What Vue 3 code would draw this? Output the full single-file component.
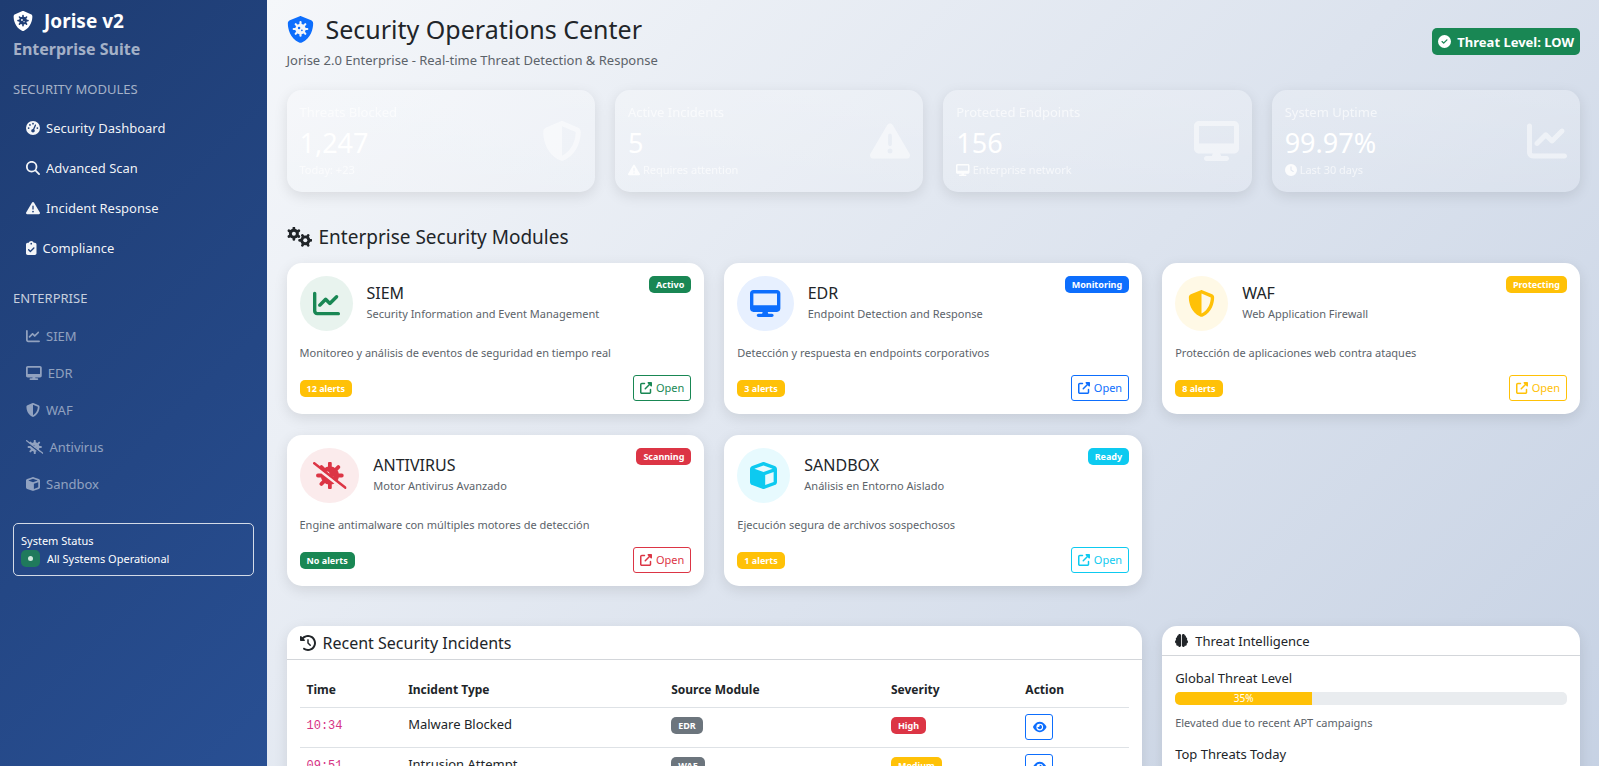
<script setup>
import { h } from 'vue'

const paths = {
  shield: [512, 'M256 0c4.6 0 9.2 1 13.4 2.9L457.7 82.8c22 9.3 38.4 31 38.3 57.2c-.5 99.2-41.3 280.7-213.6 363.2c-16.7 8-36.1 8-52.8 0C57.3 420.7 16.5 239.2 16 140c-.1-26.2 16.3-47.9 38.3-57.2L242.7 2.9C246.8 1 251.4 0 256 0zm0 66.8V444.8C394 378 431.1 230.1 432 141.4L256 66.8l0 0z'],
  warning: [512, 'M256 32c14.2 0 27.3 7.5 34.5 19.8l216 368c7.3 12.4 7.3 27.7 .2 40.1S486.3 480 472 480H40c-14.3 0-27.6-7.7-34.7-20.1s-7-27.8 .2-40.1l216-368C228.7 39.5 241.8 32 256 32zm0 128c-13.3 0-24 10.7-24 24V296c0 13.3 10.7 24 24 24s24-10.7 24-24V184c0-13.3-10.7-24-24-24zm32 224a32 32 0 1 0 -64 0 32 32 0 1 0 64 0z'],
  desktop: [576, 'M64 0C28.7 0 0 28.7 0 64V352c0 35.3 28.7 64 64 64H240l-10.7 32H160c-17.7 0-32 14.3-32 32s14.3 32 32 32H416c17.7 0 32-14.3 32-32s-14.3-32-32-32H346.7L336 416H512c35.3 0 64-28.7 64-64V64c0-35.3-28.7-64-64-64H64zM512 64V288H64V64H512z'],
  chart: [512, 'M64 64c0-17.7-14.3-32-32-32S0 46.3 0 64V400c0 44.2 35.8 80 80 80H480c17.7 0 32-14.3 32-32s-14.3-32-32-32H80c-8.8 0-16-7.2-16-16V64zm406.6 86.6c12.5-12.5 12.5-32.8 0-45.3s-32.8-12.5-45.3 0L320 210.7l-57.4-57.4c-12.5-12.5-32.8-12.5-45.3 0l-112 112c-12.5 12.5-12.5 32.8 0 45.3s32.8 12.5 45.3 0L240 221.3l57.4 57.4c12.5 12.5 32.8 12.5 45.3 0l128-128z'],
  search: [512, 'M416 208c0 45.9-14.9 88.3-40 122.7L502.6 457.4c12.5 12.5 12.5 32.8 0 45.3s-32.8 12.5-45.3 0L330.7 376c-34.4 25.2-76.8 40-122.7 40C93.1 416 0 322.9 0 208S93.1 0 208 0S416 93.1 416 208zM208 352a144 144 0 1 0 0-288 144 144 0 1 0 0 288z'],
  clipboard: [384, 'M192 0c-41.8 0-77.4 26.7-90.5 64H64C28.7 64 0 92.7 0 128V448c0 35.3 28.7 64 64 64H320c35.3 0 64-28.7 64-64V128c0-35.3-28.7-64-64-64H282.5C269.4 26.7 233.8 0 192 0zm0 64a32 32 0 1 1 0 64 32 32 0 1 1 0-64zM305 273L177 401c-9.4 9.4-24.6 9.4-33.9 0L79 337c-9.4-9.4-9.4-24.6 0-33.9s24.6-9.4 33.9 0l47 47L271 239c9.4-9.4 24.6-9.4 33.9 0s9.4 24.6 0 33.9z'],
  check: [512, 'M256 512A256 256 0 1 0 256 0a256 256 0 1 0 0 512zM369 209L241 337c-9.4 9.4-24.6 9.4-33.9 0l-64-64c-9.4-9.4-9.4-24.6 0-33.9s24.6-9.4 33.9 0l47 47L335 175c9.4-9.4 24.6-9.4 33.9 0s9.4 24.6 0 33.9z'],
  clock: [512, 'M256 0a256 256 0 1 1 0 512A256 256 0 1 1 256 0zM232 120V256c0 8 4 15.5 10.7 20l96 64c11 7.4 25.9 4.4 33.3-6.7s4.4-25.9-6.7-33.3L280 243.2V120c0-13.3-10.7-24-24-24s-24 10.7-24 24z'],
  cube: [512, 'M234.5 5.7c13.9-5 29.1-5 43.1 0l192 68.6C495 83.4 512 107.5 512 134.6V377.4c0 27-17 51.2-42.5 60.3l-192 68.6c-13.9 5-29.1 5-43.1 0l-192-68.6C17 428.6 0 404.5 0 377.4V134.6c0-27 17-51.2 42.5-60.3l192-68.6zM256 66L82.3 128 256 190l173.7-62L256 66zm32 368.6l160-57.1v-188L288 246.6v188z'],
  history: [512, 'M75 75L41 41C25.9 25.9 0 36.6 0 57.9V168c0 13.3 10.7 24 24 24H134.1c21.4 0 32.1-25.9 17-41l-30.8-30.8C155 85.5 203 64 256 64c106 0 192 86 192 192s-86 192-192 192c-40.8 0-78.6-12.7-109.7-34.4c-14.5-10.1-34.4-6.6-44.6 7.9s-6.6 34.4 7.9 44.6C151.2 495 201.7 512 256 512c141.4 0 256-114.6 256-256S397.4 0 256 0C185.3 0 121.3 28.7 75 75zm181 53c-13.3 0-24 10.7-24 24V256c0 6.4 2.5 12.5 7 17l72 72c9.4 9.4 24.6 9.4 33.9 0s9.4-24.6 0-33.9l-65-65V152c0-13.3-10.7-24-24-24z'],
  eye: [576, 'M288 32c-80.8 0-145.5 36.8-192.6 80.6C48.6 156 17.3 208 2.5 243.7c-3.3 7.9-3.3 16.7 0 24.6C17.3 304 48.6 356 95.4 399.4C142.5 443.2 207.2 480 288 480s145.5-36.8 192.6-80.6c46.8-43.5 78.1-95.4 93-131.1c3.3-7.9 3.3-16.7 0-24.6c-14.9-35.7-46.2-87.7-93-131.1C433.5 68.8 368.8 32 288 32zM144 256a144 144 0 1 1 288 0 144 144 0 1 1 -288 0zm144-64c0 35.3-28.7 64-64 64c-7.1 0-13.9-1.2-20.3-3.3c-5.5-1.8-11.9 1.6-11.7 7.4c.3 6.9 1.3 13.8 3.2 20.7c13.7 51.2 66.4 81.6 117.6 67.9s81.6-66.4 67.9-117.6c-11.1-41.5-47.8-69.4-88.6-71.1c-5.8-.2-9.2 6.1-7.4 11.7c2.1 6.4 3.3 13.2 3.3 20.3z'],
  open: [512, 'M352 0c-12.9 0-24.6 7.8-29.6 19.8s-2.2 25.7 6.9 34.9L370.7 96 201.4 265.4c-12.5 12.5-12.5 32.8 0 45.3s32.8 12.5 45.3 0L416 141.3l41.4 41.4c9.2 9.2 22.9 11.9 34.9 6.9s19.8-16.6 19.8-29.6V32c0-17.7-14.3-32-32-32H352zM80 32C35.8 32 0 67.8 0 112V432c0 44.2 35.8 80 80 80H400c44.2 0 80-35.8 80-80V320c0-17.7-14.3-32-32-32s-32 14.3-32 32V432c0 8.8-7.2 16-16 16H80c-8.8 0-16-7.2-16-16V112c0-8.8 7.2-16 16-16H192c17.7 0 32-14.3 32-32s-14.3-32-32-32H80z'],
  gauge: [512, 'M0 256a256 256 0 1 1 512 0A256 256 0 1 1 0 256zM288 96a32 32 0 1 0 -64 0 32 32 0 1 0 64 0zM256 416c35.3 0 64-28.7 64-64c0-17.4-6.9-33.1-18.1-44.6L366 161.7c5.3-12.1-.2-26.3-12.3-31.6s-26.3 .2-31.6 12.3L257.9 288c-.6 0-1.3 0-1.9 0c-35.3 0-64 28.7-64 64s28.7 64 64 64zM176 144a32 32 0 1 0 -64 0 32 32 0 1 0 64 0zM96 288a32 32 0 1 0 0-64 32 32 0 1 0 0 64zm352-32a32 32 0 1 0 -64 0 32 32 0 1 0 64 0z']
}

const lobe = 'M184 0c30.9 0 56 25.1 56 56V456c0 30.9-25.1 56-56 56c-28.9 0-52.7-21.9-55.7-50.1c-5.2 1.4-10.7 2.1-16.3 2.1c-35.3 0-64-28.7-64-64c0-7.4 1.3-14.6 3.6-21.2C21.4 367.4 0 338.2 0 304c0-31.9 18.7-59.5 45.8-72.3C37.1 220.8 32 207 32 192c0-30.7 21.6-56.3 50.4-62.6C80.8 123.9 80 118 80 112c0-29.9 20.6-55.1 48.3-62.1C131.3 21.9 155.1 0 184 0z'
const shieldOutline = 'M269.4 2.9C265.2 1 260.7 0 256 0s-9.2 1-13.4 2.9L54.3 82.8c-22 9.3-38.4 31-38.3 57.2c.5 99.2 41.3 280.7 213.6 363.2c16.7 8 36.1 8 52.8 0C454.7 420.7 495.5 239.2 496 140c.1-26.2-16.3-47.9-38.3-57.2L269.4 2.9z'

// Radial spokes around a centre, shared by the virus and gear drawings.
function spokes(cx, cy, r, count, offset = 0) {
  let d = ''
  for (let i = 0; i < count; i++) {
    const a = ((i * 360) / count + offset) * (Math.PI / 180)
    d += `M${cx} ${cy}L${(cx + r * Math.cos(a)).toFixed(1)} ${(cy + r * Math.sin(a)).toFixed(1)}`
  }
  return d
}

let maskCount = 0
const svg = (w, children) => h('svg', { viewBox: `0 0 ${w} 512`, class: 'icon', style: { width: `${w / 512}em` }, 'aria-hidden': 'true' }, children)

const virus = (cx, cy, k, body, holes) => [
  h('path', { d: spokes(cx, cy, 195 * k, 8), stroke: body, 'stroke-width': 62 * k, 'stroke-linecap': 'round', fill: 'none' }),
  h('circle', { cx, cy, r: 150 * k, fill: body }),
  h('circle', { cx: cx - 42 * k, cy: cy - 28 * k, r: 36 * k, fill: holes }),
  h('circle', { cx: cx + 40 * k, cy: cy + 40 * k, r: 24 * k, fill: holes })
]

const gear = (cx, cy, r, offset, id) => [
  h('mask', { id, maskUnits: 'userSpaceOnUse', x: 0, y: 0, width: 640, height: 512 }, [
    h('rect', { width: 640, height: 512, fill: '#fff' }),
    h('circle', { cx, cy, r: r * 0.3, fill: '#000' })
  ]),
  h('g', { mask: `url(#${id})` }, [
    h('circle', { cx, cy, r: r * 0.74, fill: 'currentColor' }),
    h('path', { d: spokes(cx, cy, r * 0.86, 6, offset), stroke: 'currentColor', 'stroke-width': r * 0.4, 'stroke-linejoin': 'round', 'stroke-linecap': 'round' })
  ])
]

const Icon = {
  props: { name: String },
  setup(props) {
    const id = `icon-mask-${++maskCount}`
    return () => {
      if (props.name === 'shieldVirus') {
        return svg(512, [
          h('mask', { id }, [h('rect', { width: 512, height: 512, fill: '#fff' }), ...virus(256, 246, 0.66, '#000', '#fff')]),
          h('path', { d: shieldOutline, fill: 'currentColor', mask: `url(#${id})` })
        ])
      }
      if (props.name === 'virusSlash') {
        return svg(640, [
          h('mask', { id, maskUnits: 'userSpaceOnUse', x: 0, y: 0, width: 640, height: 512 }, [
            ...virus(320, 256, 1.16, '#fff', '#000'),
            h('path', { d: 'M-20 44L600 528', stroke: '#000', 'stroke-width': 52 }),
            h('path', { d: 'M24 24L616 488', stroke: '#fff', 'stroke-width': 48, 'stroke-linecap': 'round' })
          ]),
          h('rect', { width: 640, height: 512, fill: 'currentColor', mask: `url(#${id})` })
        ])
      }
      if (props.name === 'gears') return svg(640, [...gear(176, 170, 172, 30, `${id}a`), ...gear(468, 342, 172, 0, `${id}b`)])
      if (props.name === 'brain') {
        return svg(512, [
          h('path', { d: lobe, fill: 'currentColor' }),
          h('path', { d: lobe, fill: 'currentColor', transform: 'translate(512 0) scale(-1 1)' })
        ])
      }
      const [w, d] = paths[props.name]
      return svg(w, [h('path', { d, fill: 'currentColor', 'fill-rule': 'evenodd' })])
    }
  }
}

const mainNav = [
  { icon: 'gauge', label: 'Security Dashboard' },
  { icon: 'search', label: 'Advanced Scan' },
  { icon: 'warning', label: 'Incident Response' },
  { icon: 'clipboard', label: 'Compliance' }
]
const enterpriseNav = [
  { icon: 'chart', label: 'SIEM' },
  { icon: 'desktop', label: 'EDR' },
  { icon: 'shield', label: 'WAF' },
  { icon: 'virusSlash', label: 'Antivirus' },
  { icon: 'cube', label: 'Sandbox' }
]
const stats = [
  { label: 'Threats Blocked', value: '1,247', note: 'Today: +23', icon: 'shield' },
  { label: 'Active Incidents', value: '5', note: 'Requires attention', noteIcon: 'warning', icon: 'warning' },
  { label: 'Protected Endpoints', value: '156', note: 'Enterprise network', noteIcon: 'desktop', icon: 'desktop' },
  { label: 'System Uptime', value: '99.97%', note: 'Last 30 days', noteIcon: 'clock', icon: 'chart' }
]
const modules = [
  { name: 'SIEM', sub: 'Security Information and Event Management', text: 'Monitoreo y análisis de eventos de seguridad en tiempo real', status: 'Activo', alerts: 12, tone: 'success', icon: 'chart' },
  { name: 'EDR', sub: 'Endpoint Detection and Response', text: 'Detección y respuesta en endpoints corporativos', status: 'Monitoring', alerts: 3, tone: 'primary', icon: 'desktop' },
  { name: 'WAF', sub: 'Web Application Firewall', text: 'Protección de aplicaciones web contra ataques', status: 'Protecting', alerts: 8, tone: 'warn', icon: 'shield' },
  { name: 'ANTIVIRUS', sub: 'Motor Antivirus Avanzado', text: 'Engine antimalware con múltiples motores de detección', status: 'Scanning', alerts: 0, tone: 'danger', icon: 'virusSlash' },
  { name: 'SANDBOX', sub: 'Análisis en Entorno Aislado', text: 'Ejecución segura de archivos sospechosos', status: 'Ready', alerts: 1, tone: 'info', icon: 'cube' }
]
const incidents = [
  { time: '10:34', type: 'Malware Blocked', source: 'EDR', severity: 'High', tone: 'danger' },
  { time: '09:51', type: 'Intrusion Attempt', source: 'WAF', severity: 'Medium', tone: 'warn' }
]
const threatLevel = 35
</script>

<template>
  <div class="shell">
    <aside class="sidebar">
      <div class="brand">
        <div class="brand-name"><Icon name="shieldVirus" /><span>Jorise v2</span></div>
        <div class="brand-sub">Enterprise Suite</div>
      </div>
      <h6 class="nav-title">SECURITY MODULES</h6>
      <nav class="nav">
        <a v-for="n in mainNav" :key="n.label" href="#" class="nav-link"><Icon :name="n.icon" />{{ n.label }}</a>
      </nav>
      <h6 class="nav-title strong">ENTERPRISE</h6>
      <nav class="nav compact">
        <a v-for="n in enterpriseNav" :key="n.label" href="#" class="nav-link"><Icon :name="n.icon" />{{ n.label }}</a>
      </nav>
      <div class="status">
        <div class="status-title">System Status</div>
        <div class="status-row"><span class="pulse"><i></i></span>All Systems Operational</div>
      </div>
    </aside>

    <main class="main">
      <header class="top">
        <div>
          <h2><Icon name="shieldVirus" /><span>Security Operations Center</span></h2>
          <p>Jorise 2.0 Enterprise - Real-time Threat Detection &amp; Response</p>
        </div>
        <div class="level"><Icon name="check" />Threat Level: LOW</div>
      </header>

      <section class="stats">
        <article v-for="s in stats" :key="s.label" class="stat">
          <div>
            <div class="stat-label">{{ s.label }}</div>
            <div class="stat-value">{{ s.value }}</div>
            <div class="stat-note"><Icon v-if="s.noteIcon" :name="s.noteIcon" /><span>{{ s.note }}</span></div>
          </div>
          <Icon :name="s.icon" class="stat-icon" />
        </article>
      </section>

      <h4 class="section-title"><Icon name="gears" />Enterprise Security Modules</h4>
      <section class="modules">
        <article v-for="m in modules" :key="m.name" class="card module" :class="m.tone">
          <div class="module-head">
            <div class="module-icon"><Icon :name="m.icon" /></div>
            <div class="module-name">
              <h5>{{ m.name }}</h5>
              <small>{{ m.sub }}</small>
            </div>
            <span class="badge tone">{{ m.status }}</span>
          </div>
          <p class="module-text">{{ m.text }}</p>
          <div class="module-foot">
            <span class="badge" :class="m.alerts ? 'alerts' : 'clear'">{{ m.alerts ? `${m.alerts} alerts` : 'No alerts' }}</span>
            <button type="button" class="open"><Icon name="open" />Open</button>
          </div>
        </article>
      </section>

      <section class="bottom">
        <article class="card incidents">
          <div class="card-head large"><Icon name="history" />Recent Security Incidents</div>
          <div class="card-body">
            <table>
              <thead>
                <tr><th class="c-time">Time</th><th class="c-type">Incident Type</th><th class="c-source">Source Module</th><th class="c-sev">Severity</th><th>Action</th></tr>
              </thead>
              <tbody>
                <tr v-for="i in incidents" :key="i.time">
                  <td><code>{{ i.time }}</code></td>
                  <td>{{ i.type }}</td>
                  <td><span class="badge grey">{{ i.source }}</span></td>
                  <td><span class="badge tone" :class="i.tone">{{ i.severity }}</span></td>
                  <td><button type="button" class="view" aria-label="View incident"><Icon name="eye" /></button></td>
                </tr>
              </tbody>
            </table>
          </div>
        </article>
        <article class="card intel">
          <div class="card-head"><Icon name="brain" />Threat Intelligence</div>
          <div class="card-body">
            <h6>Global Threat Level</h6>
            <div class="bar" role="progressbar" aria-label="Global Threat Level" :aria-valuenow="threatLevel"><div class="fill" :style="{ width: threatLevel + '%' }">{{ threatLevel }}%</div></div>
            <p class="intel-note">Elevated due to recent APT campaigns</p>
            <h6>Top Threats Today</h6>
          </div>
        </article>
      </section>
    </main>
  </div>
</template>

<style>
body { margin: 0; }
.icon { height: 1em; flex: none; display: block; overflow: visible; }
</style>

<style scoped>
* { box-sizing: border-box; }
h2, h4, h5, h6, p { margin: 0; font-weight: 400; }
.shell {
  display: grid;
  grid-template-columns: 1fr 5fr;
  height: 100vh;
  overflow: hidden;
  font: 13px/20px "Noto Sans", sans-serif;
  color: #212529;
}
.sidebar { padding: 8px 13px; color: #fff; background: linear-gradient(135deg, #1e3c72 0%, #2a5298 100%); }
.brand { font-weight: 700; margin-bottom: 16px; }
.brand-name { display: flex; align-items: center; gap: 11px; font-size: 19px; line-height: 26px; }
.brand-name .icon { font-size: 20px; }
.brand-sub { font-size: 16px; line-height: 31px; color: rgba(255, 255, 255, .6); }
.nav-title { font-size: 13px; line-height: 16px; color: rgba(255, 255, 255, .6); }
.nav-title.strong { margin-top: 26px; color: rgba(255, 255, 255, .75); }
.nav { display: flex; flex-direction: column; gap: 7px; padding-top: 14px; color: rgba(255, 255, 255, .95); }
.nav.compact { gap: 4px; padding-top: 13px; color: rgba(255, 255, 255, .5); }
.nav-link { display: flex; align-items: center; gap: 6px; height: 33px; padding: 0 13px; color: inherit; text-decoration: none; }
.nav-link .icon { font-size: 14px; }
.status { margin-top: 23px; padding: 8px 7px; border: 1px solid rgba(255, 255, 255, .8); border-radius: 5px; font-size: 11px; line-height: 18px; }
.status-row { display: flex; align-items: center; gap: 7px; line-height: 17px; }
.pulse { width: 19px; height: 17px; border-radius: 5px; background: #1f7a5c; display: grid; place-items: center; }
.pulse i { width: 5px; height: 5px; border-radius: 50%; background: #cfe8dd; }

.main { padding: 13px 19px 0 20px; min-width: 0; background: linear-gradient(135deg, #f5f7fa 0%, #c3cfe2 100%); }
.top { display: flex; justify-content: space-between; align-items: center; margin-bottom: 20px; }
h2 { display: flex; align-items: center; gap: 12px; font-size: 25px; line-height: 32px; }
h2 .icon { font-size: 27px; color: #0d6efd; }
.top p { margin-top: 5px; color: #5c636a; }
.level { display: flex; align-items: center; gap: 6px; padding: 0 6px; height: 27px; border-radius: 5px; background: #198754; color: #fff; font-weight: 700; }

.stats { display: grid; grid-template-columns: repeat(4, 1fr); gap: 20px; }
.stat { display: flex; justify-content: space-between; align-items: center; padding: 12px 13px; border-radius: 15px; color: #fff; background: linear-gradient(rgba(255, 255, 255, .25), rgba(255, 255, 255, .15)); box-shadow: 0 4px 14px rgba(0, 0, 0, .1); }
.stat-label { line-height: 20px; opacity: .65; }
.stat-value { font-size: 27px; line-height: 42px; }
.stat-note { display: flex; align-items: center; gap: 3px; font-size: 11px; line-height: 12px; padding-bottom: 4px; }
.stat-note .icon { font-size: 12px; opacity: .9; }
.stat-note span { opacity: .65; }
.stat-icon { font-size: 40px; opacity: .5; }

.section-title { display: flex; align-items: center; gap: 7px; font-size: 19px; line-height: 24px; margin: 33px 0 14px; }
.section-title .icon { font-size: 20px; }
.modules { display: grid; grid-template-columns: repeat(3, 1fr); gap: 21px 20px; }
.card { background: #fff; border-radius: 15px; box-shadow: 0 4px 14px rgba(0, 0, 0, .1); }
.module { padding: 13px; }
.module-head { display: flex; align-items: flex-start; gap: 14px; }
.module-icon { padding: 14px 13px; font-size: 27px; border-radius: 50%; background: var(--soft); color: var(--tone); }
.module-name { flex: 1; padding-top: 6px; }
h5 { font-size: 16px; line-height: 22px; }
small { display: block; font-size: 11px; line-height: 20px; color: #5c636a; }
.module-text { margin-top: 13px; font-size: 11px; line-height: 18px; color: #5c636a; }
.module-foot { display: flex; justify-content: space-between; align-items: center; margin-top: 13px; }
.badge { display: inline-block; padding: 0 7px; border-radius: 5px; font-size: 9px; line-height: 17px; font-weight: 700; color: #fff; }
.tone { background: var(--tone); }
.alerts { background: #ffc107; }
.clear { background: #198754; }
.grey { background: #6c757d; }
.success { --tone: #198754; --soft: #e8f3ee; }
.primary { --tone: #0d6efd; --soft: #e7f0ff; }
.warn { --tone: #ffc107; --soft: #fff9e6; }
.danger { --tone: #dc3545; --soft: #fbebec; }
.info { --tone: #0dcaf0; --soft: #e7fafe; }
.open { display: flex; align-items: center; gap: 4px; height: 26px; padding: 0 6px; font: 11px/18px "Noto Sans", sans-serif; color: var(--tone); background: transparent; border: 1px solid var(--tone); border-radius: 3px; }
.open .icon { font-size: 12px; }

.bottom { display: grid; grid-template-columns: repeat(3, 1fr); column-gap: 20px; margin-top: 40px; }
.incidents { grid-column: span 2; }
.incidents, .intel { min-height: 300px; }
.card-head { display: flex; align-items: center; gap: 7px; height: 30px; padding: 0 13px; border-bottom: 1px solid #d3d6da; }
.card-head.large { height: 34px; font-size: 16px; }
.card-body { padding: 13px; }
.intel .card-body { padding-top: 14px; }
table { width: 100%; border-collapse: collapse; table-layout: fixed; }
th, td { text-align: left; padding: 0 7px; border-bottom: 1px solid #dee2e6; }
th { height: 34px; padding-top: 1px; font-size: 12px; }
td { height: 40px; padding: 6px 7px; vertical-align: top; }
.c-time { width: 12.25%; }
.c-type { width: 31.7%; }
.c-source { width: 26.5%; }
.c-sev { width: 16.2%; }
code { font: 12px/20px "Liberation Mono", monospace; color: #d63384; }
.view { display: flex; align-items: center; justify-content: center; width: 28px; height: 26px; padding: 0; font-size: 12px; color: #0d6efd; background: transparent; border: 1px solid #0d6efd; border-radius: 3px; }
h6 { font-size: 13px; line-height: 16px; }
.bar { height: 13px; margin: 6px 0 9px; border-radius: 5px; background: #e9ecef; overflow: hidden; }
.fill { height: 100%; background: #ffc107; color: #fff; font-size: 10px; line-height: 13px; text-align: center; }
.intel-note { font-size: 11px; line-height: 18px; color: #5c636a; margin-bottom: 14px; }
</style>
